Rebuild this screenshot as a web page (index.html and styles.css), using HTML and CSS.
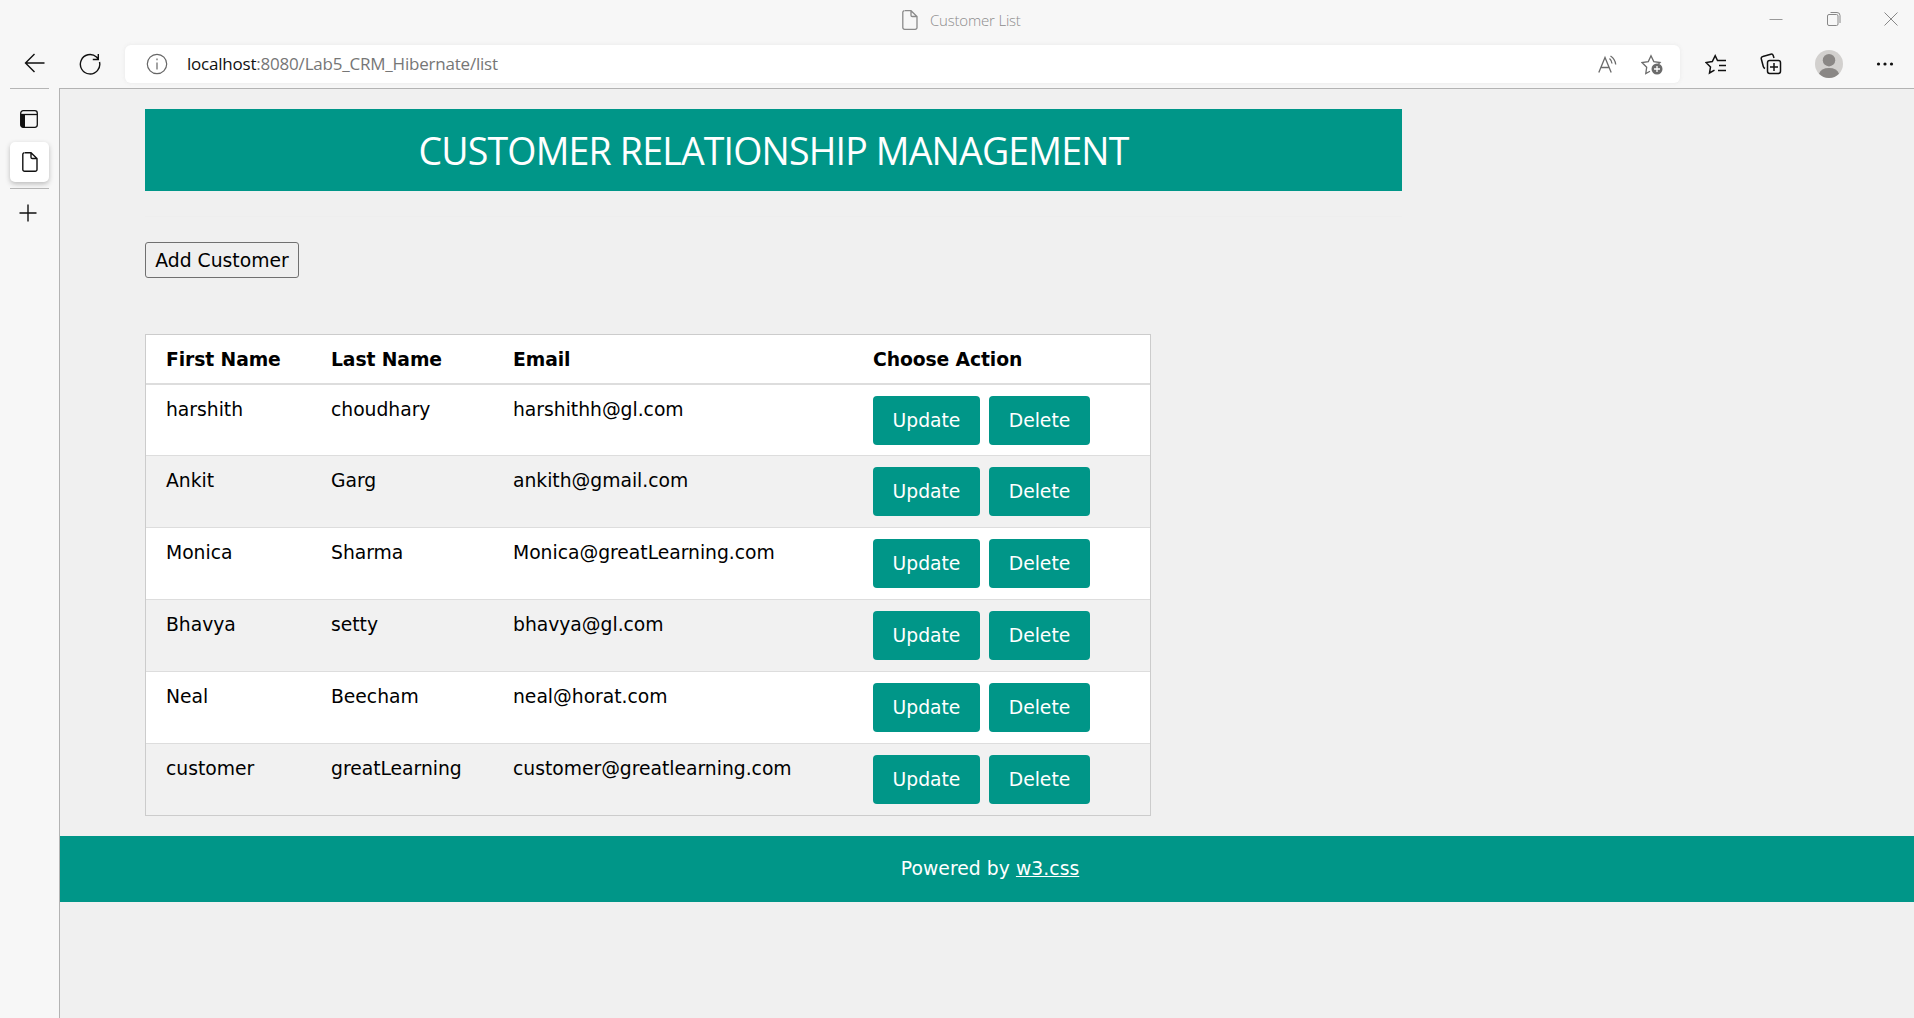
FILE: index.html
```html
<!DOCTYPE html>
<html lang="en">
<head>
<meta charset="utf-8">
<title>Customer List</title>
<link rel="stylesheet" href="styles.css">
</head>
<body>
<div class="browser">
  <header class="titlebar">
    <div class="window-title">
      <svg width="16" height="20" viewBox="0 0 16 20" fill="none" stroke="#8a8a8a" stroke-width="1.3"><path d="M3 .7h6L15 6.500v11a1.800 1.800 0 0 1-1.800 1.800H2.600A1.800 1.800 0 0 1 .8 17.500V2.500A1.800 1.800 0 0 1 2.600.7M9 .7v4.500a1.300 1.300 0 0 0 1.300 1.300H15"/></svg>
      <span class="window-name">Customer List</span>
    </div>
    <div class="window-controls">
      <svg width="14" height="14" viewBox="0 0 14 14" stroke="#999" fill="none"><path d="M.5 7.500h13"/></svg>
      <svg width="14" height="14" viewBox="0 0 14 14" stroke="#888" fill="none"><rect x=".5" y="2.500" width="10.500" height="11" rx="1.500"/><path d="M3.500.5H10a3 3 0 0 1 3 3V11"/></svg>
      <svg width="14" height="14" viewBox="0 0 14 14" stroke="#888" fill="none"><path d="M.5.5l13 13M13.500.5l-13 13"/></svg>
    </div>
  </header>
  <div class="toolbar">
    <div class="nav">
      <svg width="22" height="20" viewBox="0 0 22 20" fill="none" stroke="#111" stroke-width="1.4"><path d="M20.500 10H1.500M10.500 1L1.500 10l9 9"/></svg>
      <svg width="22" height="22" viewBox="0 0 22 22" fill="none" stroke="#111" stroke-width="1.4"><path d="M20.500 9A9.700 9.700 0 1 1 17.500 4l2 2.300M19.300 1v5.500h-5.500"/></svg>
    </div>
    <div class="address">
      <svg width="22" height="22" viewBox="0 0 22 22" fill="none" stroke="#666" stroke-width="1.2"><circle cx="11" cy="11" r="9.700"/><path d="M11 9.500v7M11 5.500v1.800"/></svg>
      <span class="url"><span class="host">localhost</span>:8080/Lab5_CRM_Hibernate/list</span>
      <div class="address-icons">
        <svg width="20" height="18" viewBox="0 0 20 18" fill="none" stroke="#6b6b6b" stroke-width="1.300"><path d="M.8 17.500L7 2.500l6.200 15M3 12.500h8M11.500 3.500q2.300 2 2.500 5M12.500 1q4.700 3 5.200 8.500"/></svg>
        <svg width="22" height="21" viewBox="0 0 22 21" fill="none" stroke="#6b6b6b" stroke-width="1.300"><path d="M9 17.200L4.800 19.500l.9-6.300L1 8.500l6.300-.9L10 1.700l2.800 5.900 6.200.9-2 2"/><circle cx="16" cy="15" r="5.500" fill="#6b6b6b" stroke="none"/><path d="M16 12v6M13 15h6" stroke="#fff"/></svg>
      </div>
    </div>
    <div class="actions">
      <svg width="22" height="21" viewBox="0 0 22 21" fill="none" stroke="#111" stroke-width="1.500"><path d="M9.500 16.200L4.500 19l1-6L1 8.500l6.300-.9L10.200 1.700l2.300 4.800H21M14 11.500h7M13 16.500h8"/></svg>
      <svg width="22" height="22" viewBox="0 0 22 22" fill="none" stroke="#111" stroke-width="1.500"><rect x="7.500" y="7.500" width="13" height="13" rx="2.200"/><path d="M14 10v8M10 14h8M5 15.500a3 3 0 0 1-1.700-2L1.300 6a2 2 0 0 1 1.500-2.500l8-2.300a2 2 0 0 1 2.400 1.300l.8 2.500"/></svg>
      <svg width="28" height="28" viewBox="0 0 28 28"><circle cx="14" cy="14" r="14" fill="#d2d0ce"/><circle cx="14" cy="10.200" r="6.200" fill="#8a8785"/><path d="M4 23.700Q6 18 14 18t10 5.700A14 14 0 0 1 4 23.700z" fill="#8a8785"/></svg>
      <svg width="18" height="4" viewBox="0 0 18 4" fill="#111"><circle cx="2.500" cy="2" r="1.600"/><circle cx="9" cy="2" r="1.600"/><circle cx="15.500" cy="2" r="1.600"/></svg>
    </div>
  </div>
  <div class="body">
    <aside class="sidebar">
      <div class="rule"></div>
      <svg class="tabs-icon" width="18" height="18" viewBox="0 0 18 18" fill="none" stroke="#111" stroke-width="1.300"><rect x=".7" y=".7" width="16.600" height="16.600" rx="2.500"/><path d="M1 4.500h16"/><path d="M.7 4.500H5v12.800H3a2.300 2.300 0 0 1-2.300-2.300z" fill="#111" stroke="none"/></svg>
      <div class="tab">
        <svg width="16" height="20" viewBox="0 0 16 20" fill="none" stroke="#111" stroke-width="1.400"><path d="M3 .7h6L15 6.500v11a1.800 1.800 0 0 1-1.800 1.800H2.600A1.800 1.800 0 0 1 .8 17.500V2.500A1.800 1.800 0 0 1 2.600.7M9 .7v4.500a1.300 1.300 0 0 0 1.300 1.300H15"/></svg>
      </div>
      <div class="rule"></div>
      <svg class="new-tab" width="18" height="18" viewBox="0 0 18 18" stroke="#111" stroke-width="1.400"><path d="M9 .5v17M.5 9h17"/></svg>
    </aside>
    <main class="page">
      <div class="content">
        <div class="banner"><h1>CUSTOMER RELATIONSHIP MANAGEMENT</h1></div>
        <hr>
        <button class="add">Add Customer</button>
        <table class="customers">
          <thead><tr><th class="first">First Name</th><th class="last">Last Name</th><th class="email">Email</th><th>Choose Action</th></tr></thead>
          <tbody>
            <tr><td>harshith</td><td>choudhary</td><td>harshithh@gl.com</td><td><div class="buttons"><a class="update">Update</a><a class="delete">Delete</a></div></td></tr>
            <tr><td>Ankit</td><td>Garg</td><td>ankith@gmail.com</td><td><div class="buttons"><a class="update">Update</a><a class="delete">Delete</a></div></td></tr>
            <tr><td>Monica</td><td>Sharma</td><td>Monica@greatLearning.com</td><td><div class="buttons"><a class="update">Update</a><a class="delete">Delete</a></div></td></tr>
            <tr><td>Bhavya</td><td>setty</td><td>bhavya@gl.com</td><td><div class="buttons"><a class="update">Update</a><a class="delete">Delete</a></div></td></tr>
            <tr><td>Neal</td><td>Beecham</td><td>neal@horat.com</td><td><div class="buttons"><a class="update">Update</a><a class="delete">Delete</a></div></td></tr>
            <tr><td>customer</td><td>greatLearning</td><td>customer@greatlearning.com</td><td><div class="buttons"><a class="update">Update</a><a class="delete">Delete</a></div></td></tr>
          </tbody>
        </table>
      </div>
      <footer class="footer"><p>Powered by <a class="credit">w3.css</a></p></footer>
    </main>
  </div>
</div>
</body>
</html>
```
FILE: styles.css
```css
* { box-sizing: border-box; }
body { margin: 0; background: #f7f7f7; overflow: hidden; font-family: Verdana, "DejaVu Sans", sans-serif; }
svg { display: block; flex: none; }
.browser { display: flex; flex-direction: column; height: 1018px; }

.titlebar { height: 45px; display: flex; font-family: "Segoe UI", "Open Sans", sans-serif; }
.window-title { flex: 1; display: flex; gap: 12px; padding: 10px 0 0 902px; }
.window-name { font-size: 15px; line-height: 20px; letter-spacing: -0.2px; color: #8c8c8c; font-weight: 300; }
.window-controls { display: flex; gap: 43.5px; padding: 12px 16px 0 0; }

.toolbar { height: 43px; display: flex; align-items: flex-start; }
.nav { width: 125px; display: flex; gap: 33px; padding: 8px 0 0 24px; }
.address { width: 1555px; height: 38px; display: flex; align-items: center; padding: 0 17px 0 21px; background: #fff; border-radius: 6px; box-shadow: 0 0 4px #e8e8e8; }
.url { margin-left: 19px; flex: 1; font: 17px/36px "Segoe UI", "Open Sans", sans-serif; letter-spacing: -0.21px; color: #767676; }
.host { color: #111; }
.address-icons { display: flex; gap: 23px; align-items: center; }
.actions { flex: 1; display: flex; align-items: center; height: 38px; padding-left: 25px; gap: 33px; }

.body { flex: 1; display: flex; min-height: 0; }
.sidebar { width: 59px; padding: 0 10px; display: flex; flex-direction: column; }
.rule { height: 1px; background: #b5b5b5; }
.tabs-icon { margin: 21px 0 14px 10px; }
.tab { height: 40px; margin-bottom: 6px; background: #fff; border-radius: 5px; box-shadow: 0 2px 5px #bbb; display: flex; align-items: center; justify-content: center; }
.new-tab { margin: 15px 0 0 9px; }

.page { flex: 1; background: #f0f0f0; border-left: 1px solid #b3b3b3; border-top: 1px solid #b3b3b3; }
.content { padding: 20px 0 0 85px; }
.banner { width: 1257px; height: 82px; background: #009688; display: flex; justify-content: center; align-items: center; }
.banner h1 { margin: 0; padding-top: 2px; font: 400 37.5px/56px "Segoe UI", "Open Sans", sans-serif; letter-spacing: -0.83px; color: #fff; white-space: nowrap; }
hr { width: 1257px; margin: 25px 0; border: 0; height: 1px; background: #eee; }
.add { display: block; width: 154px; height: 36px; padding: 1px 0 0; border: 1px solid #707070; border-radius: 3px; background: #efefef; color: #000; font: 18.75px/28px Verdana, "DejaVu Sans", sans-serif; }

.customers { margin-top: 56px; width: 1006px; border: 1px solid #ccc; border-collapse: separate; border-spacing: 0; background: #fff; table-layout: fixed; font-size: 18.75px; line-height: 28px; }
.customers th, .customers td { padding: 11px 0 0 0; text-align: left; vertical-align: top; border-bottom: 1px solid #ddd; white-space: nowrap; }
.customers th:first-child, .customers td:first-child { padding-left: 20px; }
.customers th { height: 50px; border-bottom-width: 2px; letter-spacing: -0.1px; }
.customers td { height: 72px; letter-spacing: -0.02px; }
.customers tbody tr:first-child td { height: 71px; }
.customers tr:last-child td { height: 71px; border-bottom: 0; }
.customers tbody tr:nth-child(even) { background: #f1f1f1; }
.customers thead tr:last-child th { border-bottom: 2px solid #ddd; }
.first { width: 185px; }
.last { width: 182px; }
.email { width: 360px; }
.buttons { display: flex; gap: 9px; }
.buttons a { height: 49px; line-height: 50px; border-radius: 4px; background: #009688; color: #fff; text-align: center; }
.update { width: 107px; }
.delete { width: 101px; }

.footer { margin-top: 20px; height: 66px; background: #009688; color: #fff; text-align: center; }
.footer p { margin: 0; padding-left: 6px; font-size: 18.75px; line-height: 66px; letter-spacing: 0.05px; }
.credit { text-decoration: underline; }
```
